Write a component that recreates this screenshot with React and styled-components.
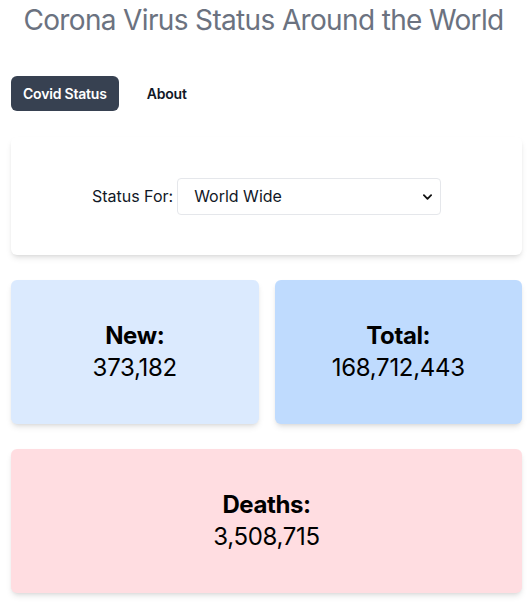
import React, { useState } from 'react'
import styled, { createGlobalStyle } from 'styled-components'

const GlobalStyle = createGlobalStyle`
  * { box-sizing: border-box; }
  body {
    margin: 0;
    background: #ffffff;
    font-family: Inter, "Noto Sans", sans-serif;
    color: #111827;
  }
`

const stats = {
  world: { new: 373182, total: 168712443, deaths: 3508715 },
}

const fmt = (n) => n.toLocaleString('en-US')

const App = () => {
  const [region, setRegion] = useState('world')
  const [tab, setTab] = useState('status')
  const data = stats[region] || stats.world

  return (
    <Page>
      <GlobalStyle />
      <Title>Corona Virus Status Around the World</Title>
      <Nav>
        <NavButton $active={tab === 'status'} onClick={() => setTab('status')}>Covid Status</NavButton>
        <NavButton $active={tab === 'about'} onClick={() => setTab('about')}>About</NavButton>
      </Nav>
      <FilterCard>
        <Label htmlFor="region">Status For:</Label>
        <SelectWrap>
          <Select id="region" value={region} onChange={(e) => setRegion(e.target.value)}>
            <option value="world">World Wide</option>
          </Select>
          <Chevron viewBox="0 0 10 6" aria-hidden="true">
            <path d="M1 1l4 4 4-4" fill="none" stroke="#111" strokeWidth="2" strokeLinecap="round" strokeLinejoin="round" />
          </Chevron>
        </SelectWrap>
      </FilterCard>
      <StatGrid>
        <StatCard $bg="#dbeafe">
          <StatLabel>New:</StatLabel>
          <StatValue>{fmt(data.new)}</StatValue>
        </StatCard>
        <StatCard $bg="#bfdbfe">
          <StatLabel>Total:</StatLabel>
          <StatValue>{fmt(data.total)}</StatValue>
        </StatCard>
        <StatCard $bg="#ffdde1" $wide>
          <StatLabel>Deaths:</StatLabel>
          <StatValue>{fmt(data.deaths)}</StatValue>
        </StatCard>
      </StatGrid>
    </Page>
  )
}

const Page = styled.div`
  padding: 0 9px 10px 11px;
`

const Title = styled.h1`
  margin: 0 3px 0 -3px;
  padding-top: 2px;
  text-align: center;
  white-space: nowrap;
  font-size: 28px;
  line-height: 36px;
  letter-spacing: -0.65px;
  font-weight: 400;
  color: #6b7280;
`

const Nav = styled.nav`
  display: flex;
  gap: 16px;
  margin-top: 38px;
`

const NavButton = styled.button`
  border: none;
  border-radius: 6px;
  padding: 8px 12px;
  height: 35px;
  font-family: inherit;
  font-size: 14px;
  line-height: 20px;
  font-weight: 600;
  letter-spacing: -0.2px;
  cursor: pointer;
  background: ${(p) => (p.$active ? '#374151' : 'transparent')};
  color: ${(p) => (p.$active ? '#ffffff' : '#111827')};
`

const FilterCard = styled.div`
  margin-top: 26px;
  height: 118px;
  display: flex;
  align-items: center;
  justify-content: center;
  gap: 4px;
  background: #ffffff;
  border-radius: 6px;
  box-shadow: 0 4px 6px -1px rgba(0, 0, 0, 0.1), 0 2px 4px -2px rgba(0, 0, 0, 0.1);
`

const Label = styled.label`
  font-size: 16px;
  color: #111827;
`

const SelectWrap = styled.div`
  position: relative;
  width: 264px;
`

const Select = styled.select`
  appearance: none;
  width: 100%;
  height: 37px;
  padding: 0 30px 0 16px;
  border: 1px solid #e5e7eb;
  border-radius: 4px;
  background: #ffffff;
  font-family: inherit;
  font-size: 16px;
  color: #111827;
`

const Chevron = styled.svg`
  position: absolute;
  right: 9px;
  top: 16px;
  width: 9px;
  height: 6px;
  pointer-events: none;
`

const StatGrid = styled.div`
  display: grid;
  grid-template-columns: 1fr 1fr;
  column-gap: 16px;
  row-gap: 25px;
  margin-top: 25px;
`

const StatCard = styled.div`
  grid-column: ${(p) => (p.$wide ? '1 / -1' : 'auto')};
  background: ${(p) => p.$bg};
  border-radius: 6px;
  padding: 40px 16px;
  height: 144px;
  text-align: center;
  box-shadow: 0 4px 6px -1px rgba(0, 0, 0, 0.1), 0 2px 4px -2px rgba(0, 0, 0, 0.1);
`

const StatLabel = styled.div`
  font-size: 24px;
  line-height: 32px;
  font-weight: 700;
  letter-spacing: -0.4px;
  color: #000;
`

const StatValue = styled.div`
  font-size: 24px;
  line-height: 32px;
  letter-spacing: -0.3px;
  color: #000;
`

export default App
